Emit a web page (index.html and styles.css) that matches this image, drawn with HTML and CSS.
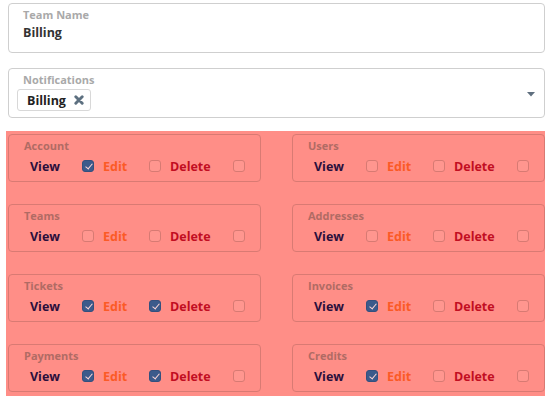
FILE: index.html
```html
<!DOCTYPE html>
<html>
<head>
<meta charset="utf-8">
<link rel="stylesheet" href="styles.css">
</head>
<body>
<div class="page">
  <div class="field">
    <div class="field-label">Team Name</div>
    <div class="field-value">Billing</div>
  </div>
  <div class="field select">
    <div class="select-main">
      <div class="field-label">Notifications</div>
      <div class="tags">
        <span class="tag">Billing<svg class="tag-x" viewBox="0 0 10 10" width="10" height="10"><path d="M1.8 1.8 L8.2 8.2 M8.2 1.8 L1.8 8.2" stroke="#5d7080" stroke-width="2.9" stroke-linecap="round"/></svg></span>
      </div>
    </div>
    <svg class="caret" viewBox="0 0 8 5" width="8" height="5"><path d="M0 0 H8 L4 4.5 Z" fill="#5f6f7f"/></svg>
  </div>

  <div class="perms">
    <div class="card">
      <div class="card-title">Account</div>
      <div class="row">
        <span class="lbl view">View</span><span class="cb on"></span>
        <span class="lbl edit">Edit</span><span class="cb"></span>
        <span class="lbl del">Delete</span><span class="cb"></span>
      </div>
    </div>
    <div class="card">
      <div class="card-title">Users</div>
      <div class="row">
        <span class="lbl view">View</span><span class="cb"></span>
        <span class="lbl edit">Edit</span><span class="cb"></span>
        <span class="lbl del">Delete</span><span class="cb"></span>
      </div>
    </div>
    <div class="card">
      <div class="card-title">Teams</div>
      <div class="row">
        <span class="lbl view">View</span><span class="cb"></span>
        <span class="lbl edit">Edit</span><span class="cb"></span>
        <span class="lbl del">Delete</span><span class="cb"></span>
      </div>
    </div>
    <div class="card">
      <div class="card-title">Addresses</div>
      <div class="row">
        <span class="lbl view">View</span><span class="cb"></span>
        <span class="lbl edit">Edit</span><span class="cb"></span>
        <span class="lbl del">Delete</span><span class="cb"></span>
      </div>
    </div>
    <div class="card">
      <div class="card-title">Tickets</div>
      <div class="row">
        <span class="lbl view">View</span><span class="cb on"></span>
        <span class="lbl edit">Edit</span><span class="cb on"></span>
        <span class="lbl del">Delete</span><span class="cb"></span>
      </div>
    </div>
    <div class="card">
      <div class="card-title">Invoices</div>
      <div class="row">
        <span class="lbl view">View</span><span class="cb on"></span>
        <span class="lbl edit">Edit</span><span class="cb"></span>
        <span class="lbl del">Delete</span><span class="cb"></span>
      </div>
    </div>
    <div class="card">
      <div class="card-title">Payments</div>
      <div class="row">
        <span class="lbl view">View</span><span class="cb on"></span>
        <span class="lbl edit">Edit</span><span class="cb on"></span>
        <span class="lbl del">Delete</span><span class="cb"></span>
      </div>
    </div>
    <div class="card">
      <div class="card-title">Credits</div>
      <div class="row">
        <span class="lbl view">View</span><span class="cb on"></span>
        <span class="lbl edit">Edit</span><span class="cb"></span>
        <span class="lbl del">Delete</span><span class="cb"></span>
      </div>
    </div>
  </div>
</div>
</body>
</html>
```
FILE: styles.css
```css
* { box-sizing: border-box; }
html, body { margin: 0; padding: 0; background: #fff; }
body {
  font-family: "Open Sans", "DejaVu Sans", sans-serif;
  width: 552px;
  height: 404px;
  overflow: hidden;
}
.page {
  padding: 3px 7px 0 6px;
  display: flex;
  flex-direction: column;
}
.field {
  margin-left: 2px;
  height: 50px;
  border: 1px solid #cfcfcf;
  border-radius: 4px;
  padding: 4px 14px 0 14px;
  background: #fff;
}
.field + .field { margin-top: 15px; }
.field-label {
  font-size: 11px;
  line-height: 14px;
  font-weight: 700;
  color: #a9a9a9;
}
.field-value {
  margin-top: 2px;
  font-size: 12.5px;
  line-height: 18px;
  font-weight: 700;
  color: #333;
}
.select {
  display: flex;
  align-items: center;
  padding: 0 9px 0 8px;
}
.select-main {
  flex: 1;
  align-self: flex-start;
  padding-top: 4px;
}
.select-main .field-label { padding-left: 6px; }
.tags { display: flex; margin-top: 2px; }
.tag {
  display: flex;
  align-items: center;
  height: 22px;
  padding: 0 6px 0 9px;
  border: 1px solid #d8d8d8;
  border-radius: 3px;
  font-size: 12.5px;
  font-weight: 700;
  color: #222;
  background: #fff;
}
.tag-x { margin-left: 8px; }
.caret { flex: none; margin-top: 2px; }

.perms {
  margin-top: 13px;
  height: 265px;
  background: #ff8e87;
  padding: 3px 0 4px 2px;
  display: grid;
  grid-template-columns: 253px 253px;
  column-gap: 31px;
  grid-auto-rows: 48px;
  row-gap: 22px;
}
.card {
  border: 1px solid #d97a73;
  border-radius: 4px;
  padding: 4px 0 0 15px;
}
.card-title {
  font-size: 11px;
  line-height: 14px;
  font-weight: 700;
  color: #b06b64;
}
.row {
  margin-top: 4px;
  margin-left: 6px;
  display: flex;
  align-items: center;
  height: 18px;
}
.lbl {
  font-size: 12.5px;
  line-height: 18px;
  font-weight: 700;
  margin-top: 2px;
}
.view { width: 52px; color: #2b0f3c; }
.edit { width: 46px; color: #fb5a26; margin-left: 9px; }
.del { width: 63px; color: #c20e22; margin-left: 9px; }
.cb {
  width: 12px;
  height: 12px;
  border: 1px solid #d77a73;
  border-radius: 3px;
  background: #ff968f;
  position: relative;
}
.cb.on {
  background: #3c5a8b;
  border-color: #34507e;
}
.cb.on::after {
  content: "";
  position: absolute;
  left: 3.5px;
  top: 1px;
  width: 3px;
  height: 6px;
  border-right: 1.3px solid #ffd6d6;
  border-bottom: 1.3px solid #ffd6d6;
  transform: rotate(40deg);
}
```
